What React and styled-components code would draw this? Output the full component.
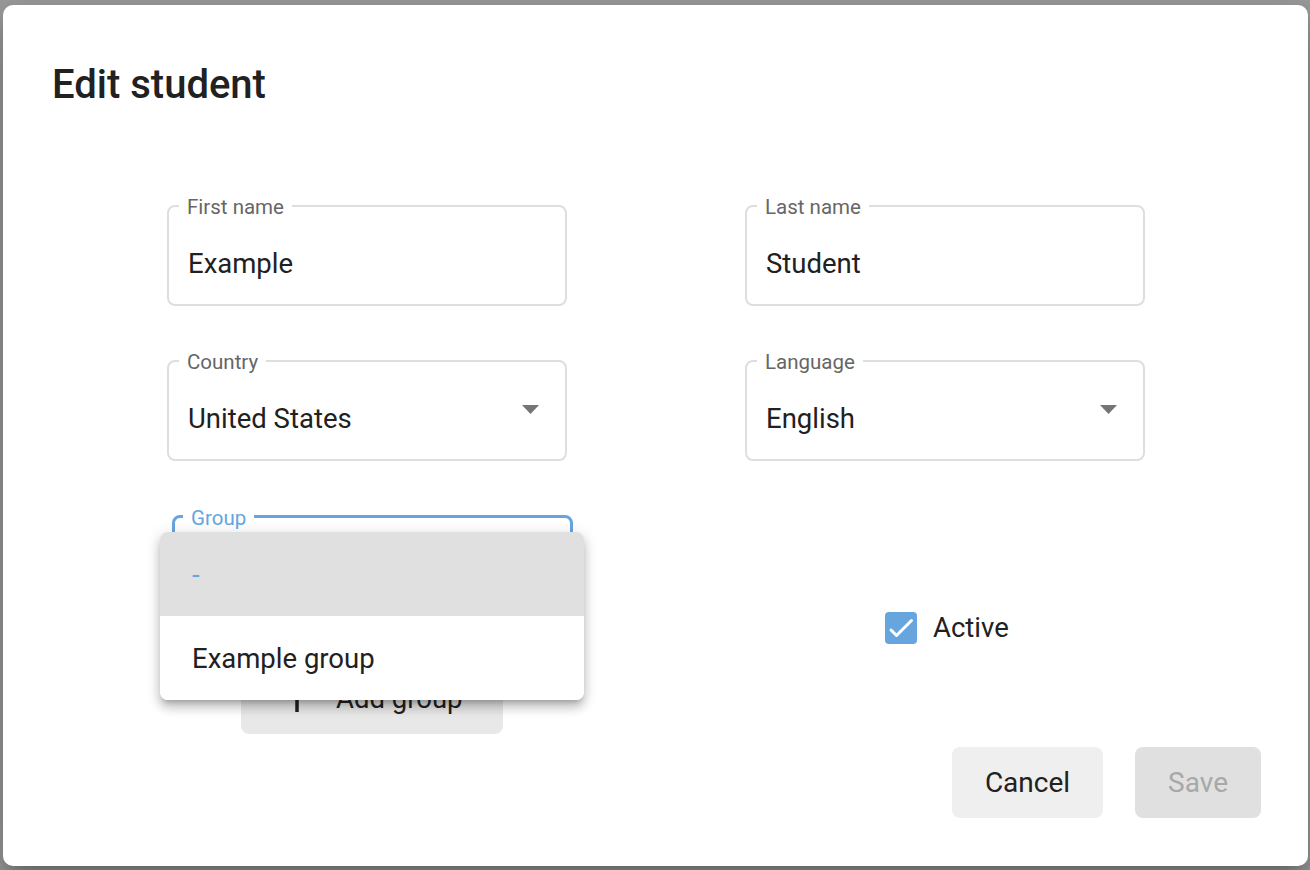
import styled, { createGlobalStyle } from "styled-components";

const GlobalStyle = createGlobalStyle`
    * {
        box-sizing: border-box;
    }
    body {
        margin: 0;
        background-color: #9c9c9c;
        font-family: Roboto, "Liberation Sans", Arial, sans-serif;
        color: #212121;
    }
`;

const BLUE = "#66a5dd";

function Field({ label, value, select, focused, children }) {
    return (
        <FieldBox $focused={focused}>
            <FieldLabel $focused={focused}>{label}</FieldLabel>
            <FieldValue>{value}</FieldValue>
            {select && (
                <Arrow viewBox="0 0 17 9">
                    <path d="M0 0h17L8.5 9z" fill="#757575" />
                </Arrow>
            )}
            {children}
        </FieldBox>
    );
}

function App() {
    return (
        <Page>
            <GlobalStyle />
            <Dialog>
                <Title>Edit student</Title>
                <Form>
                    <Field label="First name" value="Example" />
                    <Field label="Last name" value="Student" />
                    <Field label="Country" value="United States" select />
                    <Field label="Language" value="English" select />
                    <GroupColumn>
                        <GroupSlot>
                            <Field label="Group" value="" select focused>
                                <Menu>
                                    <MenuItem $selected>-</MenuItem>
                                    <MenuItem>Example group</MenuItem>
                                </Menu>
                            </Field>
                        </GroupSlot>
                        <AddButton>
                            <svg width="28" height="28" viewBox="0 0 28 28">
                                <path
                                    d="M14 0v28M0 14h28"
                                    stroke="#212121"
                                    strokeWidth="3.5"
                                />
                            </svg>
                            Add group
                        </AddButton>
                    </GroupColumn>
                    <ActiveColumn>
                        <CheckRow>
                            <CheckBox viewBox="0 0 32 32">
                                <rect width="32" height="32" rx="4" fill={BLUE} />
                                <polyline
                                    points="6,18 11.5,23.5 26.5,8.5"
                                    fill="none"
                                    stroke="#fff"
                                    strokeWidth="3"
                                    strokeLinecap="round"
                                    strokeLinejoin="round"
                                />
                            </CheckBox>
                            Active
                        </CheckRow>
                    </ActiveColumn>
                </Form>
                <Footer>
                    <Button>Cancel</Button>
                    <Button $disabled>Save</Button>
                </Footer>
            </Dialog>
        </Page>
    );
}

export default App;

const Page = styled.div`
    height: 870px;
    padding: 5px 2px 4px 3px;
`;

const Dialog = styled.div`
    display: flex;
    flex-direction: column;
    height: 100%;
    background-color: #fff;
    border-radius: 10px;
    box-shadow: 0 11px 15px -7px rgba(0, 0, 0, 0.2),
        0 24px 38px 3px rgba(0, 0, 0, 0.14), 0 9px 46px 8px rgba(0, 0, 0, 0.12);
`;

const Title = styled.h2`
    margin: 0;
    padding: 56px 49px 0;
    font-size: 40px;
    line-height: 48px;
    font-weight: 500;
    color: #212121;
`;

const Form = styled.div`
    display: grid;
    grid-template-columns: 400px 400px;
    column-gap: 178px;
    row-gap: 54px;
    padding: 96px 0 0 164px;
`;

const FieldBox = styled.div`
    position: relative;
    display: flex;
    align-items: center;
    height: 101px;
    padding: 0 26px 0 19px;
    border: ${(p) => (p.$focused ? `3px solid ${BLUE}` : "2px solid #dedede")};
    border-radius: 8px;
`;

const FieldLabel = styled.span`
    position: absolute;
    top: -12px;
    left: ${(p) => (p.$focused ? "8px" : "10px")};
    padding: 0 8px 0 8px;
    background-color: #fff;
    font-size: 20.5px;
    line-height: 24px;
    color: ${(p) => (p.$focused ? BLUE : "#666")};
`;

const FieldValue = styled.span`
    flex: 1;
    padding-top: 16px;
    font-size: 27.5px;
    line-height: 33px;
    color: #212121;
`;

const Arrow = styled.svg`
    width: 17px;
    height: 9px;
    margin-bottom: 2px;
`;

const GroupColumn = styled.div`
    display: flex;
    flex-direction: column;
    align-items: flex-start;
    gap: 46px;
`;

const GroupSlot = styled.div`
    width: 401px;
    margin-left: 5px;
`;

const Menu = styled.div`
    position: absolute;
    top: 14px;
    left: -15px;
    z-index: 2;
    width: 424px;
    background-color: #fff;
    border-radius: 8px;
    overflow: hidden;
    box-shadow: 0 5px 5px -3px rgba(0, 0, 0, 0.2),
        0 8px 10px 1px rgba(0, 0, 0, 0.14), 0 3px 14px 2px rgba(0, 0, 0, 0.12);
`;

const MenuItem = styled.div`
    display: flex;
    align-items: center;
    height: 84px;
    padding-left: 32px;
    font-size: 27.5px;
    color: ${(p) => (p.$selected ? BLUE : "#212121")};
    background-color: ${(p) => (p.$selected ? "#e0e0e0" : "#fff")};
`;

const AddButton = styled.div`
    display: flex;
    align-items: center;
    gap: 25px;
    width: 262px;
    height: 72px;
    margin-left: 74px;
    padding-left: 42px;
    background-color: #e8e8e8;
    border-radius: 8px;
    font-size: 27.5px;
    color: #212121;
`;

const ActiveColumn = styled.div`
    padding: 96px 0 0 140px;
`;

const CheckRow = styled.label`
    display: flex;
    align-items: center;
    gap: 16px;
    font-size: 27.5px;
    color: #212121;
`;

const CheckBox = styled.svg`
    width: 32px;
    height: 32px;
`;

const Footer = styled.div`
    display: flex;
    justify-content: flex-end;
    gap: 32px;
    margin-top: auto;
    padding: 0 47px 48px 0;
`;

const Button = styled.div`
    display: flex;
    align-items: center;
    justify-content: center;
    height: 71px;
    padding: 0 33px;
    border-radius: 8px;
    font-size: 28px;
    background-color: ${(p) => (p.$disabled ? "#e0e0e0" : "#efefef")};
    color: ${(p) => (p.$disabled ? "#a8a8a8" : "#212121")};
`;
